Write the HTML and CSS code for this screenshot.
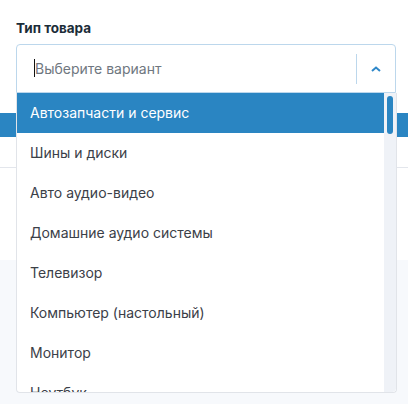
FILE: index.html
```html
<!DOCTYPE html>
<html lang="ru">
<head>
<meta charset="utf-8">
<link rel="stylesheet" href="styles.css">
</head>
<body>
<div class="page">
  <div class="field">
    <label class="label">Тип товара</label>
    <div class="select">
      <div class="control">
        <div class="value"><span class="caret"></span><span class="placeholder">Выберите вариант</span></div>
        <div class="indicator">
          <svg width="10" height="6" viewBox="0 0 10 6"><path d="M1 5 L5 1.5 L9 5" fill="none" stroke="#2f88c9" stroke-width="2"/></svg>
        </div>
      </div>
      <div class="menu">
        <ul class="options">
          <li class="option active">Автозапчасти и сервис</li>
          <li class="option">Шины и диски</li>
          <li class="option">Авто аудио-видео</li>
          <li class="option">Домашние аудио системы</li>
          <li class="option">Телевизор</li>
          <li class="option">Компьютер (настольный)</li>
          <li class="option">Монитор</li>
          <li class="option">Ноутбук</li>
        </ul>
        <div class="scrollbar"><div class="thumb"></div></div>
      </div>
    </div>
  </div>
  <div class="tabbar"></div>
  <div class="section"></div>
  <div class="footer-area"></div>
</div>
</body>
</html>
```
FILE: styles.css
```css
* { box-sizing: border-box; }
html, body { margin: 0; padding: 0; }
body {
  font-family: Inter, "Noto Sans", "Liberation Sans", sans-serif;
  background: #ffffff;
  width: 408px;
  height: 404px;
  overflow: hidden;
}
.page { display: flex; flex-direction: column; height: 404px; }
.field { padding: 20px 12px 0 16px; position: relative; z-index: 2; }
.label {
  display: block;
  font-size: 13.5px;
  line-height: 16px;
  font-weight: 700;
  color: #1b2c38;
  margin-bottom: 8px;
}
.select { position: relative; width: 380px; }
.control {
  height: 49px;
  border: 1px solid #bcd7ec;
  border-radius: 4px 4px 0 0;
  display: flex;
  align-items: center;
  background: #fff;
}
.value {
  flex: 1;
  display: flex;
  align-items: center;
  padding-left: 17px;
  padding-bottom: 1px;
}
.caret {
  width: 1px;
  height: 18px;
  background: #111;
}
.placeholder {
  font-size: 14px;
  color: #6f7780;
}
.indicator {
  width: 39px;
  height: 30px;
  border-left: 1px solid #bcd7ec;
  display: flex;
  align-items: center;
  justify-content: center;
}
.indicator svg { display: block; }
.menu {
  position: absolute;
  top: 49px;
  left: 0;
  width: 381px;
  height: 300px;
  background: #fff;
  border: 1px solid #e1e4e9;
  border-top: none;
  border-radius: 0 0 4px 4px;
  display: flex;
  overflow: hidden;
}
.options {
  list-style: none;
  margin: 0;
  padding: 0;
  flex: 1;
  overflow: hidden;
}
.option {
  height: 40px;
  display: flex;
  align-items: center;
  padding-left: 13px;
  padding-bottom: 1px;
  font-size: 14px;
  color: #3b4048;
  white-space: nowrap;
}
.option.active { background: #2a85c2; color: #fff; }
.scrollbar {
  width: 12px;
  background: #eff2f7;
  padding: 3px 3px;
  border-radius: 0 0 4px 0;
}
.thumb {
  width: 6px;
  height: 38px;
  background: #2a85c2;
  border-radius: 3px;
}
.tabbar {
  height: 24px;
  margin-top: 20px;
  background: #2a85c2;
}
.section {
  height: 31px;
  border-bottom: 1px solid #e3e6ec;
}
.footer-area {
  margin-top: 92px;
  flex: 1;
  background: #f7f9fc;
}
```
